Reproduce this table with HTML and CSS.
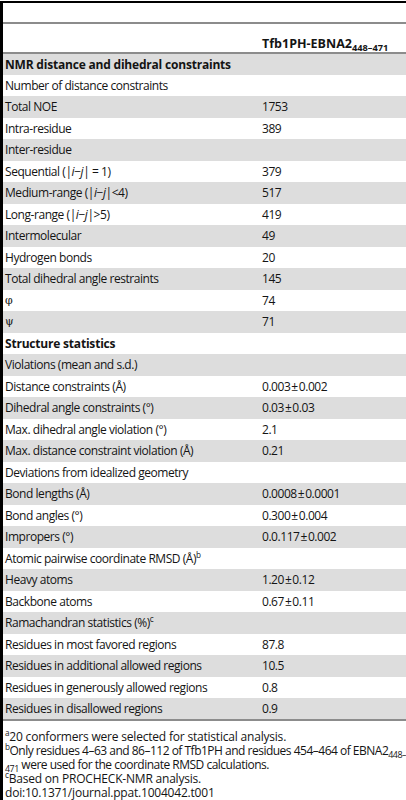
FILE: index.html
```html
<!DOCTYPE html>
<html lang="en">

<head>
    <meta charset="UTF-8">
    <meta name="viewport" content="width=device-width, initial-scale=1.0">
    <title>Table 1 - Structural statistics</title>

    <link rel="stylesheet" href="styles.css">
</head>

<body>
    <section class="page">
        <div class="top-gap"></div>
        <table class="stats">
            <thead>
                <tr>
                    <th></th>
                    <th>Tfb1PH-EBNA2<sub>448–471</sub></th>
                </tr>
            </thead>
            <tbody>
                <tr class="head"><td>NMR distance and dihedral constraints</td><td></td></tr>
                <tr><td>Number of distance constraints</td><td></td></tr>
                <tr><td>Total NOE</td><td>1753</td></tr>
                <tr><td>Intra-residue</td><td>389</td></tr>
                <tr><td>Inter-residue</td><td></td></tr>
                <tr><td>Sequential (|<i>i</i>−<i>j</i>| = 1)</td><td>379</td></tr>
                <tr><td>Medium-range (|<i>i</i>−<i>j</i>|&lt;4)</td><td>517</td></tr>
                <tr><td>Long-range (|<i>i</i>−<i>j</i>|&gt;5)</td><td>419</td></tr>
                <tr><td>Intermolecular</td><td>49</td></tr>
                <tr><td>Hydrogen bonds</td><td>20</td></tr>
                <tr><td>Total dihedral angle restraints</td><td>145</td></tr>
                <tr><td class="greek">φ</td><td>74</td></tr>
                <tr><td class="greek">ψ</td><td>71</td></tr>
                <tr class="head"><td>Structure statistics</td><td></td></tr>
                <tr><td>Violations (mean and s.d.)</td><td></td></tr>
                <tr><td>Distance constraints (Å)</td><td>0.003<span class="pm">±</span>0.002</td></tr>
                <tr><td>Dihedral angle constraints (°)</td><td>0.03<span class="pm">±</span>0.03</td></tr>
                <tr><td>Max. dihedral angle violation (°)</td><td>2.1</td></tr>
                <tr><td>Max. distance constraint violation (Å)</td><td>0.21</td></tr>
                <tr><td>Deviations from idealized geometry</td><td></td></tr>
                <tr><td>Bond lengths (Å)</td><td>0.0008<span class="pm">±</span>0.0001</td></tr>
                <tr><td>Bond angles (°)</td><td>0.300<span class="pm">±</span>0.004</td></tr>
                <tr><td>Impropers (°)</td><td>0.0.117<span class="pm">±</span>0.002</td></tr>
                <tr><td>Atomic pairwise coordinate RMSD (Å)<sup>b</sup></td><td></td></tr>
                <tr><td>Heavy atoms</td><td>1.20<span class="pm">±</span>0.12</td></tr>
                <tr><td>Backbone atoms</td><td>0.67<span class="pm">±</span>0.11</td></tr>
                <tr><td>Ramachandran statistics (%)<sup>c</sup></td><td></td></tr>
                <tr><td>Residues in most favored regions</td><td>87.8</td></tr>
                <tr><td>Residues in additional allowed regions</td><td>10.5</td></tr>
                <tr><td>Residues in generously allowed regions</td><td>0.8</td></tr>
                <tr><td>Residues in disallowed regions</td><td>0.9</td></tr>
            </tbody>
        </table>

        <div class="notes">
            <p><sup>a</sup>20 conformers were selected for statistical analysis.</p>
            <p class="nowrap"><sup>b</sup>Only residues 4–63 and 86–112 of Tfb1PH and residues 454–464 of EBNA2<sub>448–</sub><br><sub>471</sub> were used for the coordinate RMSD calculations.</p>
            <p><sup>c</sup>Based on PROCHECK-NMR analysis.</p>
            <p>doi:10.1371/journal.ppat.1004042.t001</p>
        </div>
    </section>
</body>

</html>
```

FILE: styles.css
```css
* {
    padding: 0;
    margin: 0;
    box-sizing: border-box;
}

body {
    background-color: #fff;
    font-family: 'Open Sans', 'DejaVu Sans', sans-serif;
    color: #141414;
    overflow: hidden;
}

.page {
    width: 406px;
    height: 800px;
    border-left: 3px solid #000;
    border-top: 2px solid #000;
    margin-top: 1px;
}

.top-gap {
    height: 21px;
    border-bottom: 2px solid #8c8c8c;
}

.stats {
    width: 100%;
    border-collapse: collapse;
    font-size: 12px;
    letter-spacing: -0.45px;
    border-bottom: 2px solid #8c8c8c;
}

.stats th {
    height: 29px;
    text-align: left;
    font-size: 12.5px;
    font-weight: 700;
    letter-spacing: 0;
    padding: 10px 0 0 0;
    border-bottom: 2px solid #8c8c8c;
}

.stats td {
    height: 21.5px;
    padding: 0 0 0 2px;
    vertical-align: middle;
    white-space: nowrap;
}

.stats td:first-child {
    width: 259px;
}

.stats td:last-child {
    padding-left: 0;
}

.stats tbody tr:nth-child(odd) {
    background-color: #dddddd;
}

.stats .head td {
    font-weight: 700;
    letter-spacing: -0.2px;
}

.pm {
    padding: 0 1px;
}

.stats sub,
.notes sub {
    font-size: 0.74em;
    vertical-align: -0.35em;
    line-height: 0;
}

.stats sup,
.notes sup {
    font-size: 0.68em;
    vertical-align: 0.6em;
    line-height: 0;
}

.greek {
    font-family: 'DejaVu Serif', serif;
    font-size: 11px;
}

.notes {
    padding: 9px 0 0 2px;
    font-size: 12px;
    letter-spacing: -0.2px;
    line-height: 14px;
}

.notes .nowrap {
    white-space: nowrap;
    letter-spacing: -0.5px;
}
```
